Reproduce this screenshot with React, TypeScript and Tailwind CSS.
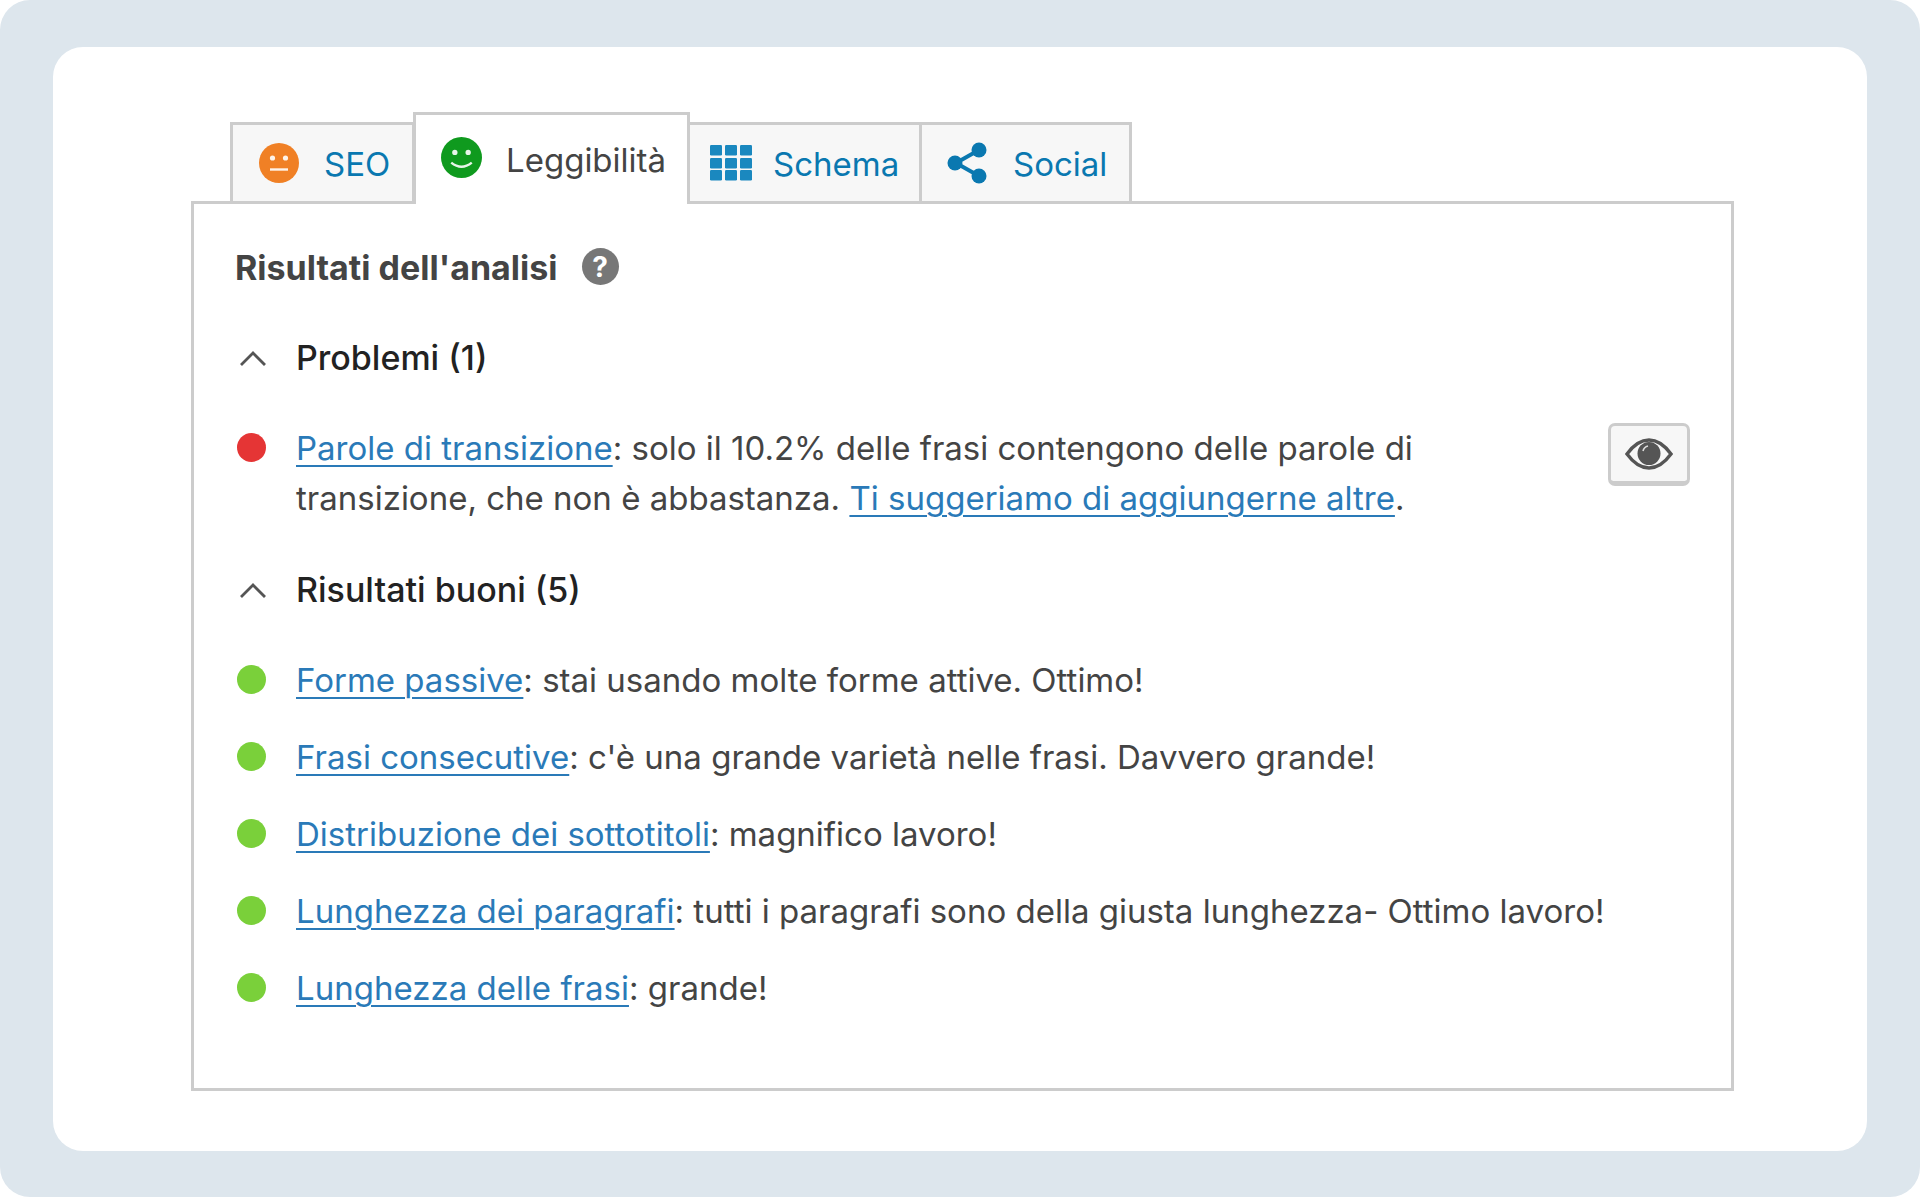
function Chevron() {
  return (
    <svg width="28" height="18" viewBox="0 0 28 18" fill="none" stroke="#555" strokeWidth="2.8" className="block">
      <path d="M2 16 L14 4 L26 16" />
    </svg>
  );
}

function Face({ color, smile, size }: { color: string; smile: boolean; size: number }) {
  return (
    <svg width={size} height={size} viewBox="0 0 40 40" className="block shrink-0">
      <circle cx="20" cy="20" r="20" fill={color} />
      <circle cx="13.5" cy="15" r="2.6" fill="#fff" fillOpacity="0.9" />
      <circle cx="26.5" cy="15" r="2.6" fill="#fff" fillOpacity="0.9" />
      {smile ? (
        <path d="M10 25 Q20 33 30 25" fill="none" stroke="#fff" strokeOpacity="0.9" strokeWidth="2.4" />
      ) : (
        <path d="M11 26.5 H29" fill="none" stroke="#fff" strokeOpacity="0.9" strokeWidth="2.4" />
      )}
    </svg>
  );
}

function GridIcon() {
  return (
    <svg width="42" height="36" viewBox="0 0 42 36" fill="#1a88bf" className="block shrink-0">
      {[0, 13, 25].map((y) =>
        [0, 15, 30].map((x) => <rect key={`${x}-${y}`} x={x} y={y} width="12" height="10.5" rx="1.2" />),
      )}
    </svg>
  );
}

function ShareIcon() {
  return (
    <svg width="42" height="42" viewBox="0 0 42 42" className="block shrink-0">
      <path d="M32 8 L9 21 L32 34" fill="none" stroke="#0a78b0" strokeWidth="4" />
      <circle cx="32" cy="8" r="7.5" fill="#0a78b0" />
      <circle cx="8" cy="21" r="7.5" fill="#0a78b0" />
      <circle cx="32" cy="34" r="7.5" fill="#0a78b0" />
    </svg>
  );
}

function EyeIcon() {
  return (
    <svg width="48" height="32" viewBox="0 0 48 32" className="block">
      <path d="M2 16 C10 5 17 2 24 2 C31 2 38 5 46 16 C38 27 31 30 24 30 C17 30 10 27 2 16 Z" fill="none" stroke="#555" strokeWidth="3.4" />
      <circle cx="24" cy="15.5" r="11.5" fill="#555" />
      <path d="M18 13 A7 7 0 0 1 23 8" fill="none" stroke="#ddd" strokeWidth="1.6" />
    </svg>
  );
}

function Dot({ color }: { color: string }) {
  return <span className={`block w-[29px] h-[29px] rounded-full ${color}`} />;
}

function Link({ children }: { children: string }) {
  return <a className="text-[#2a7ab8] underline decoration-[2px] underline-offset-[5px]">{children}</a>;
}

function SectionHead({ children }: { children: string }) {
  return (
    <div className="flex items-center h-[50px]">
      <span className="w-[102px] pl-[45px]">
        <Chevron />
      </span>
      <span className="text-[#222] font-medium text-[34px]">{children}</span>
    </div>
  );
}

function GoodRow({ link, text }: { link: string; text: string }) {
  return (
    <div className="flex items-center h-[50px] mb-[27px]">
      <span className="w-[102px] pl-[43px] -mt-[2px]">
        <Dot color="bg-[#7ad03a]" />
      </span>
      <p>
        <Link>{link}</Link>
        {text}
      </p>
    </div>
  );
}

export default function App() {
  return (
    <div className="w-[1920px] h-[1197px] bg-white">
      <div className="w-full h-full rounded-[30px] bg-[#dde6ed] px-[53px] pt-[47px] pb-[46px]">
        <div className="h-full rounded-[30px] bg-white px-[138px] pt-[65px] font-['Inter',sans-serif] text-[33px] text-[#444] leading-[50px]">
          <div className="flex items-end pl-[39px] -mb-[3px] relative h-[92px]">
            <div className="w-[185px] h-[82px] border-[3px] border-[#ccc] bg-[#f7f7f7] flex items-center pl-[26px] gap-[25px] text-[#0a78b0]">
              <Face color="#f08025" smile={false} size={40} />
              <span className="mt-[2px]">SEO</span>
            </div>
            <div className="w-[277px] h-[92px] -ml-[2px] border-[3px] border-b-0 border-[#ccc] bg-white flex items-center pl-[25px] pb-[4px] gap-[24px] text-[#444] relative">
              <Face color="#0f9a1e" smile size={41} />
              <span className="mt-[4px]">Leggibilità</span>
            </div>
            <div className="w-[232px] h-[82px] border-[3px] border-l-0 border-[#ccc] bg-[#f7f7f7] flex items-center pl-[20px] gap-[21px] text-[#0a78b0]">
              <GridIcon />
              <span className="mt-[2px]">Schema</span>
            </div>
            <div className="w-[210px] h-[82px] border-[3px] border-l-0 border-[#ccc] bg-[#f7f7f7] flex items-center pl-[25px] gap-[24px] text-[#0a78b0]">
              <ShareIcon />
              <span className="mt-[2px]">Social</span>
            </div>
          </div>
          <div className="w-[1543px] h-[890px] border-[3px] border-[#ccc] pl-[41px] pr-[40px] pt-[39px]">
            <div className="flex items-center h-[50px] gap-[24px] mb-[40px] font-bold text-[#444] text-[34px]">
              <span>Risultati dell'analisi</span>
              <span className="w-[37px] h-[37px] rounded-full bg-[#777] text-white flex items-center justify-center text-[28px] leading-none -mt-[3px]">
                ?
              </span>
            </div>
            <div className="-ml-[41px]">
              <SectionHead>Problemi (1)</SectionHead>
              <div className="flex mt-[40px] mb-[42px]">
                <span className="w-[102px] pl-[43px] pt-[10px] shrink-0">
                  <Dot color="bg-[#e53535]" />
                </span>
                <p className="w-[1200px] shrink-0">
                  <Link>Parole di transizione</Link>: solo il 10.2% delle frasi contengono delle parole di transizione, che non è abbastanza.{' '}
                  <Link>Ti suggeriamo di aggiungerne altre</Link>.
                </p>
                <button className="ml-[112px] mt-[0px] w-[82px] h-[63px] shrink-0 rounded-[7px] border-[3px] border-b-[5px] border-[#ccc] bg-[#f7f7f7] flex items-center justify-center">
                  <EyeIcon />
                </button>
              </div>
              <SectionHead>Risultati buoni (5)</SectionHead>
              <div className="mt-[40px]">
                <GoodRow link="Forme passive" text=": stai usando molte forme attive. Ottimo!" />
                <GoodRow link="Frasi consecutive" text=": c'è una grande varietà nelle frasi. Davvero grande!" />
                <GoodRow link="Distribuzione dei sottotitoli" text=": magnifico lavoro!" />
                <GoodRow link="Lunghezza dei paragrafi" text=": tutti i paragrafi sono della giusta lunghezza- Ottimo lavoro!" />
                <GoodRow link="Lunghezza delle frasi" text=": grande!" />
              </div>
            </div>
          </div>
        </div>
      </div>
    </div>
  );
}
